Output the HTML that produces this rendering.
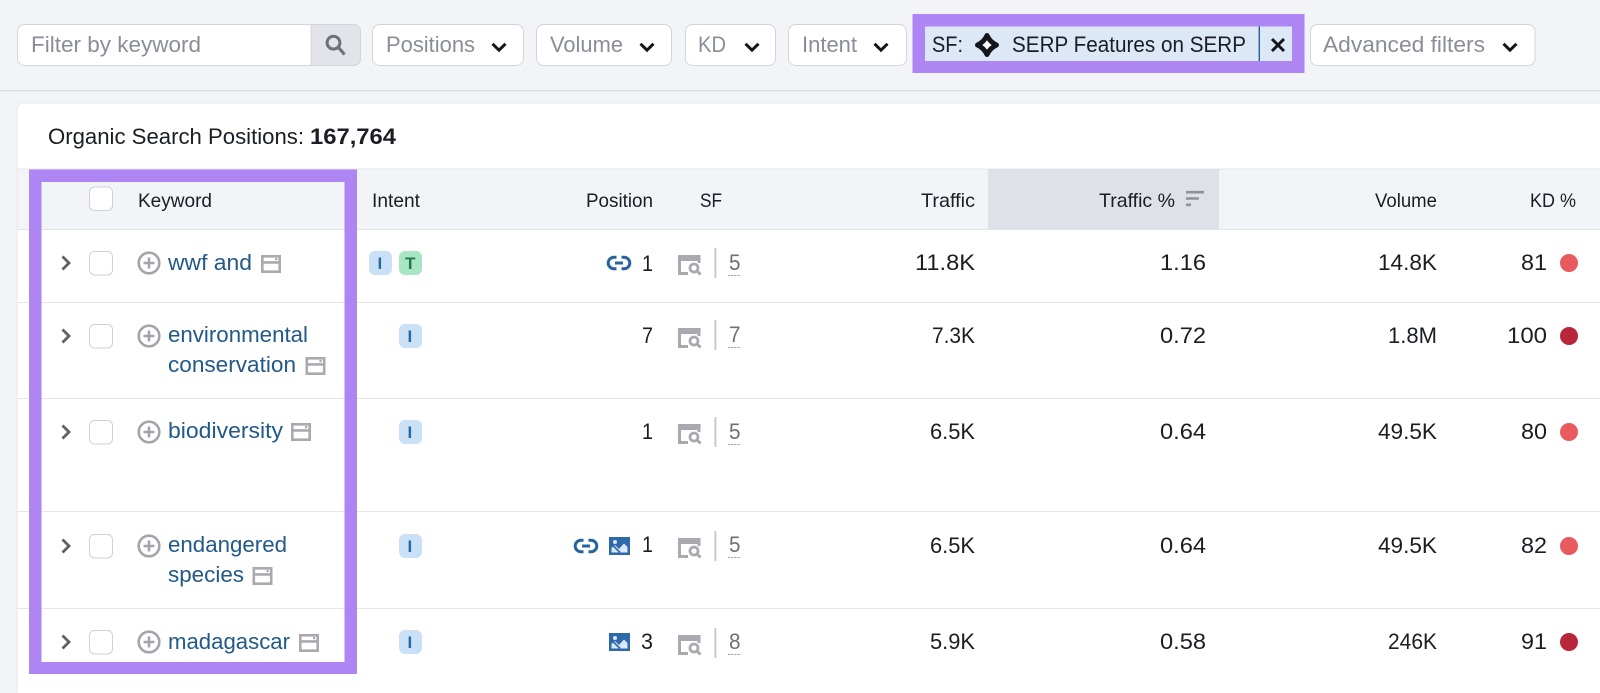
<!DOCTYPE html>
<html><head><meta charset="utf-8"><title>Organic Search Positions</title>
<style>
html,body{margin:0;padding:0;background:#f3f4f8;width:1600px;height:693px;overflow:hidden}
svg{display:block}
text{font-family:"Liberation Sans",sans-serif;font-size:22px;fill:#1b1d24}
.h{font-size:19.5px}
.r{font-size:22.5px;fill:#1b1d24}
.g{fill:#8a8d99}
.l{fill:#22598a}
.s{fill:#6d7079}
.t{font-size:22px}
.bi{font-size:17px;font-weight:bold;fill:#2a6aa3}
</style></head><body>
<svg width="1600" height="693" viewBox="0 0 1600 693">
<defs>
<g id="chev"><path d="M-6.5-3.2 L0 3.2 L6.5-3.2" fill="none" stroke="#14161c" stroke-width="3"/></g>
<g id="exp"><path d="M-3.5-6.5 L3 0 L-3.5 6.5" fill="none" stroke="#5f6168" stroke-width="2.8"/></g>
<g id="cb"><rect x="0.5" y="0.5" width="23" height="23.5" rx="5" fill="#fff" stroke="#cfd1d8"/></g>
<g id="plus"><circle r="10.3" fill="#fff" stroke="#a4a5ac" stroke-width="2.6"/><path d="M-5.5 0H5.5M0-5.5V5.5" stroke="#a4a5ac" stroke-width="2.6"/></g>
<g id="page"><path d="M1.3 1.3H18.7V16.7H1.3Z M1.3 7.4H18.7" fill="#fff" stroke="#a9aab0" stroke-width="2.6"/><rect x="14" y="3" width="2.2" height="2.2" fill="#a9aab0"/></g>
<g id="serp"><path d="M0 0H22.5V8H19.5V6H3V17H10V20H0Z" fill="#a9aab0"/><circle cx="16" cy="13" r="4" fill="#fff" stroke="#a9aab0" stroke-width="2.8"/><path d="M19 16L22.5 19.5" stroke="#a9aab0" stroke-width="3"/></g>
<g id="link"><path d="M9.5-5.8H7A5.8 5.8 0 0 0 7 5.8H9.5M14.5-5.8H17A5.8 5.8 0 0 1 17 5.8H14.5M8 0H16" fill="none" stroke="#27649f" stroke-width="3"/></g>
<g id="img"><rect width="21" height="18" fill="#2f6aa8"/><path d="M2.5 15.5V11L6 8L10 12L15 6.5L18.5 10V15.5Z" fill="#dbe8f5"/><path d="M3 7.5L11 15.5" stroke="#2f6aa8" stroke-width="1.6"/><circle cx="6" cy="5" r="2" fill="#dbe8f5"/></g>
<g id="div"><rect width="1.8" height="30" fill="#c4c5cb"/></g>
</defs>

<!-- top -->
<rect width="1600" height="693" fill="#f3f4f8"/>
<rect x="0" y="90" width="1600" height="1.2" fill="#dcdde3"/>

<rect x="17.5" y="24.5" width="343" height="41" rx="7" fill="#fff" stroke="#d3d5dc"/>
<path d="M311 24.5H353.5a7 7 0 0 1 7 7V58.5a7 7 0 0 1-7 7H311Z" fill="#e3e4ea" stroke="#d3d5dc"/>
<circle cx="333.5" cy="42.7" r="6.4" fill="none" stroke="#6f7179" stroke-width="3"/>
<path d="M338.5 47.5L344.5 54.5" stroke="#6f7179" stroke-width="3.2"/>
<text class="g" x="31" y="52" textLength="170" lengthAdjust="spacingAndGlyphs">Filter by keyword</text>

<rect x="372.5" y="24.5" width="151" height="41" rx="7" fill="#fff" stroke="#d3d5dc"/>
<text class="g" x="386" y="52" textLength="89" lengthAdjust="spacingAndGlyphs">Positions</text>
<use href="#chev" x="499" y="47"/>
<rect x="536.5" y="24.5" width="135" height="41" rx="7" fill="#fff" stroke="#d3d5dc"/>
<text class="g" x="550" y="52" textLength="73" lengthAdjust="spacingAndGlyphs">Volume</text>
<use href="#chev" x="647" y="47"/>
<rect x="685.5" y="24.5" width="90" height="41" rx="7" fill="#fff" stroke="#d3d5dc"/>
<text class="g" x="698" y="52" textLength="28" lengthAdjust="spacingAndGlyphs">KD</text>
<use href="#chev" x="752" y="47"/>
<rect x="788.5" y="24.5" width="118" height="41" rx="7" fill="#fff" stroke="#d3d5dc"/>
<text class="g" x="802" y="52" textLength="55" lengthAdjust="spacingAndGlyphs">Intent</text>
<use href="#chev" x="881" y="47"/>

<rect x="912.5" y="14" width="392" height="59" fill="#ae86f3"/>
<rect x="925" y="26.5" width="367" height="34.5" fill="#dde8f7"/>
<rect x="1258.6" y="26.5" width="1.4" height="34.5" fill="#24608f"/>
<text x="932" y="52" textLength="31" lengthAdjust="spacingAndGlyphs">SF:</text>
<path d="M987 35.5Q990 42 996.5 45Q990 48 987 54.5Q984 48 977.5 45Q984 42 987 35.5Z" fill="#fff" stroke="#14161c" stroke-width="5" stroke-linejoin="round"/>
<text x="1012" y="52" textLength="234" lengthAdjust="spacingAndGlyphs">SERP Features on SERP</text>
<path d="M1272 39L1284 51M1284 39L1272 51" stroke="#14161c" stroke-width="3"/>

<rect x="1310.5" y="24.5" width="224.5" height="41" rx="7" fill="#fff" stroke="#d3d5dc"/>
<text class="g" x="1323" y="52" textLength="162" lengthAdjust="spacingAndGlyphs">Advanced filters</text>
<use href="#chev" x="1510" y="47"/>

<!-- card -->
<path d="M17 693V109a6 6 0 0 1 6-6H1600V693Z" fill="#fff"/>
<path d="M17 693V109a6 6 0 0 1 6-6H1600" fill="none" stroke="#e6e7ec"/>
<text class="t" x="48" y="144" textLength="256" lengthAdjust="spacingAndGlyphs">Organic Search Positions:</text>
<text class="t" x="310" y="144" textLength="86" font-weight="bold" lengthAdjust="spacingAndGlyphs">167,764</text>

<rect x="17.5" y="169" width="1582.5" height="60" fill="#f3f4f8"/>
<rect x="17.5" y="168.5" width="1582.5" height="1" fill="#e3e4e9"/>
<rect x="17.5" y="229" width="1582.5" height="1" fill="#e3e4e9"/>
<rect x="988" y="169" width="231" height="60" fill="#dfe0e8"/>
<use href="#cb" x="89" y="186.5"/>
<text class="h" x="138" y="207" textLength="74" lengthAdjust="spacingAndGlyphs">Keyword</text>
<text class="h" x="372" y="207" textLength="48" lengthAdjust="spacingAndGlyphs">Intent</text>
<text class="h" x="586" y="207" textLength="67" lengthAdjust="spacingAndGlyphs">Position</text>
<text class="h" x="700" y="207" textLength="22" lengthAdjust="spacingAndGlyphs">SF</text>
<text class="h" x="921" y="207" textLength="54" lengthAdjust="spacingAndGlyphs">Traffic</text>
<text class="h" x="1099" y="207" textLength="76" lengthAdjust="spacingAndGlyphs">Traffic %</text>
<path d="M1186 192.2H1204M1186 198.5H1199M1186 204.8H1191" stroke="#8f9098" stroke-width="2.6"/>
<text class="h" x="1375" y="207" textLength="62" lengthAdjust="spacingAndGlyphs">Volume</text>
<text class="h" x="1530" y="207" textLength="46" lengthAdjust="spacingAndGlyphs">KD %</text>

<!-- row lines -->
<rect x="17.5" y="302" width="1582.5" height="1" fill="#e5e6eb"/>
<rect x="17.5" y="398" width="1582.5" height="1" fill="#e5e6eb"/>
<rect x="17.5" y="511" width="1582.5" height="1" fill="#e5e6eb"/>
<rect x="17.5" y="608" width="1582.5" height="1" fill="#e5e6eb"/>

<!-- row 1 -->
<use href="#exp" x="66" y="263"/><use href="#cb" x="89" y="251"/><use href="#plus" x="149" y="263"/>
<text class="r l" x="168" y="270" textLength="84" lengthAdjust="spacingAndGlyphs">wwf and</text>
<use href="#page" x="261" y="255"/>
<rect x="369" y="251" width="23" height="24" rx="6" fill="#c9e0f7"/><text class="bi" x="377.5" y="269">I</text>
<rect x="399" y="251" width="23" height="24" rx="6" fill="#a8e6c1"/><text class="bi" x="405" y="269" style="fill:#1f7a4d">T</text>
<use href="#link" x="607" y="263"/>
<text class="r" x="642" y="271" textLength="11" lengthAdjust="spacingAndGlyphs">1</text>
<use href="#serp" x="678" y="255"/><use href="#div" x="714.5" y="248"/>
<text class="r s" x="729" y="270" textLength="11.5" lengthAdjust="spacingAndGlyphs">5</text>
<path d="M728 275.5H741" stroke="#9a9ba2" stroke-dasharray="2 1.2"/>
<text class="r" x="915" y="270" textLength="60" lengthAdjust="spacingAndGlyphs">11.8K</text>
<text class="r" x="1160" y="270" textLength="46" lengthAdjust="spacingAndGlyphs">1.16</text>
<text class="r" x="1378" y="270" textLength="59" lengthAdjust="spacingAndGlyphs">14.8K</text>
<text class="r" x="1521" y="270" textLength="26" lengthAdjust="spacingAndGlyphs">81</text>
<circle cx="1569" cy="263" r="9" fill="#e85a5e"/>

<!-- row 2 -->
<use href="#exp" x="66" y="336"/><use href="#cb" x="89" y="324"/><use href="#plus" x="149" y="336"/>
<text class="r l" x="168" y="342" textLength="140" lengthAdjust="spacingAndGlyphs">environmental</text>
<text class="r l" x="168" y="372" textLength="128" lengthAdjust="spacingAndGlyphs">conservation</text>
<use href="#page" x="305.5" y="357"/>
<rect x="399" y="324" width="23" height="24" rx="6" fill="#c9e0f7"/><text class="bi" x="407.5" y="342">I</text>
<text class="r" x="642" y="343" textLength="11" lengthAdjust="spacingAndGlyphs">7</text>
<use href="#serp" x="678" y="328"/><use href="#div" x="714.5" y="320"/>
<text class="r s" x="729" y="342" textLength="11.5" lengthAdjust="spacingAndGlyphs">7</text>
<path d="M728 347.5H741" stroke="#9a9ba2" stroke-dasharray="2 1.2"/>
<text class="r" x="932" y="343" textLength="43" lengthAdjust="spacingAndGlyphs">7.3K</text>
<text class="r" x="1160" y="343" textLength="46" lengthAdjust="spacingAndGlyphs">0.72</text>
<text class="r" x="1388" y="343" textLength="49" lengthAdjust="spacingAndGlyphs">1.8M</text>
<text class="r" x="1507" y="343" textLength="40" lengthAdjust="spacingAndGlyphs">100</text>
<circle cx="1569" cy="336" r="9" fill="#b8263a"/>

<!-- row 3 -->
<use href="#exp" x="66" y="432"/><use href="#cb" x="89" y="420"/><use href="#plus" x="149" y="432"/>
<text class="r l" x="168" y="438" textLength="115" lengthAdjust="spacingAndGlyphs">biodiversity</text>
<use href="#page" x="291" y="423"/>
<rect x="399" y="420" width="23" height="24" rx="6" fill="#c9e0f7"/><text class="bi" x="407.5" y="438">I</text>
<text class="r" x="642" y="439" textLength="11" lengthAdjust="spacingAndGlyphs">1</text>
<use href="#serp" x="678" y="424"/><use href="#div" x="714.5" y="417"/>
<text class="r s" x="729" y="439" textLength="11.5" lengthAdjust="spacingAndGlyphs">5</text>
<path d="M728 444.5H741" stroke="#9a9ba2" stroke-dasharray="2 1.2"/>
<text class="r" x="930" y="439" textLength="45" lengthAdjust="spacingAndGlyphs">6.5K</text>
<text class="r" x="1160" y="439" textLength="46" lengthAdjust="spacingAndGlyphs">0.64</text>
<text class="r" x="1378" y="439" textLength="59" lengthAdjust="spacingAndGlyphs">49.5K</text>
<text class="r" x="1521" y="439" textLength="26" lengthAdjust="spacingAndGlyphs">80</text>
<circle cx="1569" cy="432" r="9" fill="#e85a5e"/>

<!-- row 4 -->
<use href="#exp" x="66" y="546"/><use href="#cb" x="89" y="534"/><use href="#plus" x="149" y="546"/>
<text class="r l" x="168" y="552" textLength="119" lengthAdjust="spacingAndGlyphs">endangered</text>
<text class="r l" x="168" y="582" textLength="76" lengthAdjust="spacingAndGlyphs">species</text>
<use href="#page" x="252.5" y="567"/>
<rect x="399" y="534" width="23" height="24" rx="6" fill="#c9e0f7"/><text class="bi" x="407.5" y="552">I</text>
<use href="#link" x="574" y="546"/><use href="#img" x="609" y="537"/>
<text class="r" x="642" y="552" textLength="11" lengthAdjust="spacingAndGlyphs">1</text>
<use href="#serp" x="678" y="538"/><use href="#div" x="714.5" y="531"/>
<text class="r s" x="729" y="552" textLength="11.5" lengthAdjust="spacingAndGlyphs">5</text>
<path d="M728 557.5H741" stroke="#9a9ba2" stroke-dasharray="2 1.2"/>
<text class="r" x="930" y="553" textLength="45" lengthAdjust="spacingAndGlyphs">6.5K</text>
<text class="r" x="1160" y="553" textLength="46" lengthAdjust="spacingAndGlyphs">0.64</text>
<text class="r" x="1378" y="553" textLength="59" lengthAdjust="spacingAndGlyphs">49.5K</text>
<text class="r" x="1521" y="553" textLength="26" lengthAdjust="spacingAndGlyphs">82</text>
<circle cx="1569" cy="546" r="9" fill="#e85a5e"/>

<!-- row 5 -->
<use href="#exp" x="66" y="642"/><use href="#cb" x="89" y="630"/><use href="#plus" x="149" y="642"/>
<text class="r l" x="168" y="649" textLength="122" lengthAdjust="spacingAndGlyphs">madagascar</text>
<use href="#page" x="299" y="634"/>
<rect x="399" y="630" width="23" height="24" rx="6" fill="#c9e0f7"/><text class="bi" x="407.5" y="648">I</text>
<use href="#img" x="609" y="633"/>
<text class="r" x="641" y="649" textLength="12" lengthAdjust="spacingAndGlyphs">3</text>
<use href="#serp" x="678" y="635"/><use href="#div" x="714.5" y="628"/>
<text class="r s" x="729" y="649" textLength="11.5" lengthAdjust="spacingAndGlyphs">8</text>
<path d="M728 654.5H741" stroke="#9a9ba2" stroke-dasharray="2 1.2"/>
<text class="r" x="930" y="649" textLength="45" lengthAdjust="spacingAndGlyphs">5.9K</text>
<text class="r" x="1160" y="649" textLength="46" lengthAdjust="spacingAndGlyphs">0.58</text>
<text class="r" x="1388" y="649" textLength="49" lengthAdjust="spacingAndGlyphs">246K</text>
<text class="r" x="1521" y="649" textLength="26" lengthAdjust="spacingAndGlyphs">91</text>
<circle cx="1569" cy="642" r="9" fill="#b8263a"/>

<!-- purple frame -->
<path fill-rule="evenodd" d="M29 169.5H357V674H29Z M41.5 182V662H344.5V182Z" fill="#ae86f3"/>
</svg>
</body></html>
